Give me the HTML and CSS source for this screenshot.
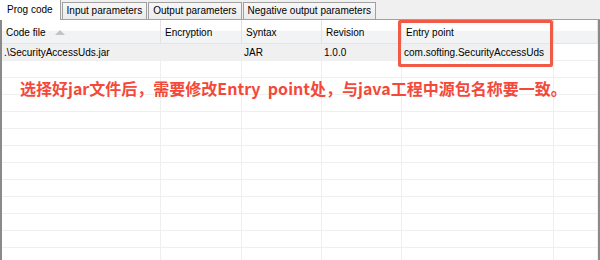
FILE: index.html
```html
<!DOCTYPE html>
<html>
<head>
<meta charset="utf-8">
<link rel="stylesheet" href="styles.css">
</head>
<body>
<div class="window">
  <div class="tabs">
    <div class="tab active">Prog code</div>
    <div class="tab">Input parameters</div>
    <div class="tab">Output parameters</div>
    <div class="tab">Negative output parameters</div>
  </div>
  <div class="panel">
    <div class="grid">
      <div class="hcell">Code file <span class="sort"></span></div>
      <div class="hcell">Encryption</div>
      <div class="hcell">Syntax</div>
      <div class="hcell">Revision</div>
      <div class="hcell">Entry point</div>
      <div class="hcell"></div>

      <div class="cell sel">.\SecurityAccessUds.jar</div>
      <div class="cell sel"></div>
      <div class="cell sel">JAR</div>
      <div class="cell sel">1.0.0</div>
      <div class="cell sel">com.softing.SecurityAccessUds</div>
      <div class="cell"></div>

      <div class="cell"></div><div class="cell"></div><div class="cell"></div><div class="cell"></div><div class="cell"></div><div class="cell"></div>
      <div class="cell"></div><div class="cell"></div><div class="cell"></div><div class="cell"></div><div class="cell"></div><div class="cell"></div>
      <div class="cell"></div><div class="cell"></div><div class="cell"></div><div class="cell"></div><div class="cell"></div><div class="cell"></div>
      <div class="cell"></div><div class="cell"></div><div class="cell"></div><div class="cell"></div><div class="cell"></div><div class="cell"></div>
      <div class="cell"></div><div class="cell"></div><div class="cell"></div><div class="cell"></div><div class="cell"></div><div class="cell"></div>
      <div class="cell"></div><div class="cell"></div><div class="cell"></div><div class="cell"></div><div class="cell"></div><div class="cell"></div>
      <div class="cell"></div><div class="cell"></div><div class="cell"></div><div class="cell"></div><div class="cell"></div><div class="cell"></div>
      <div class="cell"></div><div class="cell"></div><div class="cell"></div><div class="cell"></div><div class="cell"></div><div class="cell"></div>
      <div class="cell"></div><div class="cell"></div><div class="cell"></div><div class="cell"></div><div class="cell"></div><div class="cell"></div>
      <div class="cell"></div><div class="cell"></div><div class="cell"></div><div class="cell"></div><div class="cell"></div><div class="cell"></div>
      <div class="cell"></div><div class="cell"></div><div class="cell"></div><div class="cell"></div><div class="cell"></div><div class="cell"></div>
      <div class="cell"></div><div class="cell"></div><div class="cell"></div><div class="cell"></div><div class="cell"></div><div class="cell"></div>
    </div>
    <div class="highlight"></div>
    <div class="note">选择好jar文件后，需要修改Entry&nbsp; point处，与java工程中源包名称要一致。</div>
  </div>
</div>
</body>
</html>
```
FILE: styles.css
```css
html, body {
  margin: 0;
  padding: 0;
  width: 600px;
  height: 260px;
  overflow: hidden;
  background: #ffffff;
}
.window {
  width: 600px;
  height: 260px;
  display: flex;
  flex-direction: column;
  font-family: "Liberation Sans", Arial, sans-serif;
  font-size: 10px;
  color: #000;
  background: #f0f0f0;
}
.tabs {
  height: 20px;
  display: flex;
  align-items: flex-end;
  gap: 1px;
  box-sizing: border-box;
  border-bottom: 1px solid #a0a0a0;
  background: #f0f0f0;
}
.tab {
  height: 17px;
  box-sizing: border-box;
  padding: 0 4px;
  line-height: 16px;
  border: 1px solid #a0a0a0;
  border-bottom: none;
  background: linear-gradient(#f7f7f7, #ebebeb);
  white-space: nowrap;
}
.tab.active {
  height: 21px;
  margin-bottom: -1px;
  padding: 0 7px;
  line-height: 19px;
  background: #ffffff;
  border-left: none;
  z-index: 1;
}
.panel {
  flex: 1;
  position: relative;
  background: #ffffff;
  border-left: 2px solid #8a8a8a;
  border-right: 2px solid #8a8a8a;
  overflow: hidden;
}
.grid {
  display: grid;
  grid-template-columns: 159px 81px 80px 80px 152px 44px;
  grid-auto-rows: 17px;
  grid-template-rows: 24px;
}
.hcell {
  box-sizing: border-box;
  padding: 2px 4px 0;
  border-right: 1px solid #e2e2e2;
  border-bottom: 1px solid #e5e5e5;
  background: linear-gradient(#ffffff 0%, #ffffff 45%, #f2f3f5 50%, #f2f3f5 100%);
  white-space: nowrap;
  display: flex;
  align-items: center;
  gap: 10px;
}
.sort {
  width: 0;
  height: 0;
  border-left: 5px solid transparent;
  border-right: 5px solid transparent;
  border-bottom: 5px solid #c4c4c4;
}
.cell {
  box-sizing: border-box;
  padding: 1px 2px 0;
  line-height: 15px;
  border-right: 1px solid #efefef;
  border-bottom: 1px solid #efefef;
  white-space: nowrap;
  overflow: hidden;
}
.cell.sel {
  background: #f0f0f0;
}
.highlight {
  position: absolute;
  left: 396px;
  top: 0;
  width: 155px;
  height: 47px;
  box-sizing: border-box;
  border: 3px solid #f25a48;
  border-radius: 2px;
}
.note {
  position: absolute;
  left: 18px;
  top: 57px;
  font-family: "Noto Sans CJK SC", "Liberation Sans", sans-serif;
  font-weight: bold;
  font-size: 16px;
  line-height: 22px;
  color: #f4493a;
  white-space: nowrap;
}
```
